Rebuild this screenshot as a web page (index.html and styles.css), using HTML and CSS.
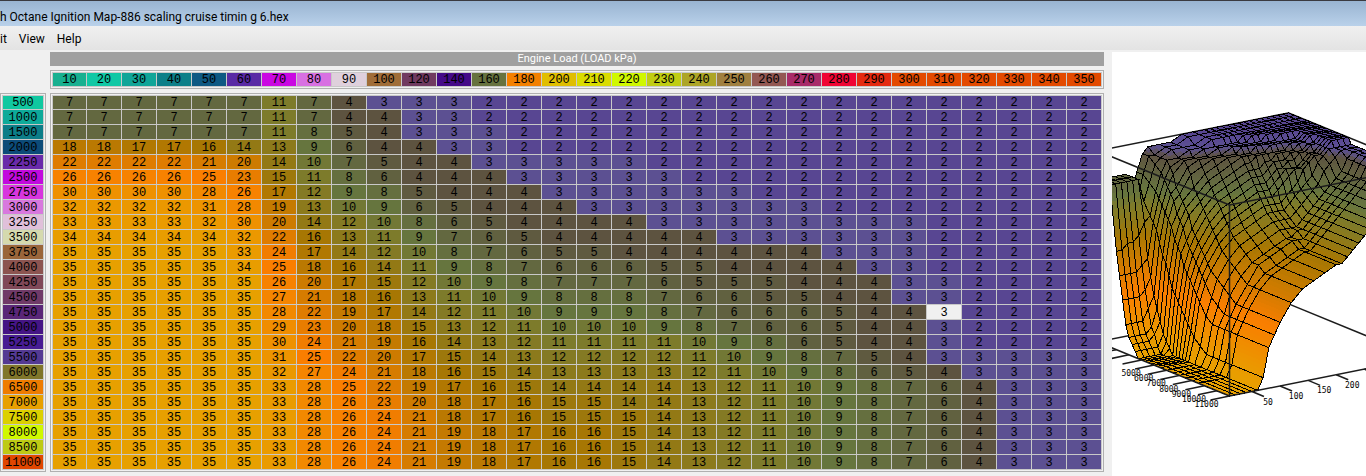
FILE: index.html
```
<!DOCTYPE html>
<html lang="en">
  <head>
    <meta charset="UTF-8" />
    <meta name="viewport" content="width=device-width, initial-scale=1.0" />
    <title>Ignition Map</title>
    <link rel="stylesheet" href="styles.css">
  </head>
  <body>
    <header class="title-bar">h Octane Ignition Map-886 scaling cruise timin g 6.hex</header>

    <nav class="menu-bar">
      <button class="menu-item">it</button>
      <button class="menu-item">View</button>
      <button class="menu-item">Help</button>
    </nav>

    <main class="workspace">
      <div class="map">
        <div class="axis-title">Engine Load (LOAD kPa)</div>
        <div class="frame load-frame">
          <table class="grid" id="loadAxis" aria-label="Engine load axis"></table>
        </div>
        <div class="frame rpm-frame">
          <table class="grid rpm-grid" id="rpmAxis" aria-label="Engine speed axis"></table>
        </div>
        <div class="frame data-frame">
          <table class="grid" id="mapData" aria-label="Ignition timing"></table>
        </div>
      </div>
      <div class="plot">
        <svg id="surface" class="surface" role="img" aria-label="Ignition timing surface"></svg>
      </div>
    </main>

    <script src="script.js"></script>
  </body>
</html>
```

FILE: styles.css
```
* {
  box-sizing: border-box;
}

body {
  margin: 0;
  min-height: 100vh;
  display: flex;
  flex-direction: column;
  overflow: hidden;
  background-color: #f0f0f0;
  color: #000;
  font-family: Roboto, "Open Sans", sans-serif;
  font-size: 12px;
}

.title-bar {
  height: 26px;
  padding-top: 6px;
  border-top: 1px solid #3a3a40;
  background: linear-gradient(#99b4d1, #b9d1ea);
  line-height: 20px;
  white-space: nowrap;
}

.menu-bar {
  display: flex;
  gap: 12px;
  height: 24px;
  background: linear-gradient(#f0f0f0, #e3e3e3);
}

.menu-item {
  padding: 2px 0 0;
  border: none;
  background: none;
  color: inherit;
  font: inherit;
  line-height: 22px;
}

.workspace {
  flex: 1;
  display: flex;
  gap: 8px;
  padding-top: 2px;
}

.map {
  flex: none;
  display: grid;
  grid-template-columns: auto auto;
  grid-template-rows: auto auto 1fr;
  gap: 4px;
  align-items: start;
}

.axis-title {
  grid-column: 2;
  height: 14px;
  background-color: #a0a0a0;
  color: #fff;
  font-size: 11px;
  line-height: 14px;
  text-align: center;
}

.frame {
  padding: 1px;
  border: 1px solid #b0b0b0;
}

.load-frame,
.data-frame {
  grid-column: 2;
}

.rpm-frame {
  grid-column: 1;
}

.grid {
  border-collapse: separate;
  border-spacing: 0;
  border-top: 1px solid #c8c8c8;
  border-left: 1px solid #c8c8c8;
  font-family: "Liberation Mono", monospace;
  font-size: 12px;
  line-height: 12px;
  text-align: center;
}

.grid th,
.grid td {
  width: 35px;
  min-width: 35px;
  height: 15px;
  padding: 1px 0 0;
  border-right: 1px solid #c8c8c8;
  border-bottom: 1px solid #c8c8c8;
  font-weight: normal;
}

.grid th:first-child,
.grid td:first-child {
  width: 34px;
  min-width: 34px;
}

.grid tr:first-child th,
.grid tr:first-child td {
  height: 14px;
}

.grid.rpm-grid th {
  width: 41px;
  min-width: 41px;
}

.grid .selected {
  background-color: #f0f0f0;
}

.plot {
  flex: 1;
  min-width: 0;
  position: relative;
  overflow: hidden;
  background-color: #fff;
}

.surface {
  display: block;
  width: 100%;
  height: 100%;
}

.mesh {
  fill: none;
  stroke: #000;
  stroke-width: 1;
  shape-rendering: crispEdges;
}

.patch {
  shape-rendering: crispEdges;
}

.axis-line {
  stroke: #1c1c1c;
  stroke-width: 1.5;
}

.tick-label {
  font-family: "DejaVu Sans Mono", monospace;
  font-size: 8px;
  text-anchor: middle;
}
```

FILE: script.js
```
const loads = [
  10, 20, 30, 40, 50, 60, 70, 80, 90, 100, 120, 140, 160, 180, 200,
  210, 220, 230, 240, 250, 260, 270, 280, 290, 300, 310, 320, 330, 340, 350
];

const loadColors = [
  "#18b090", "#10c8a5", "#10a598", "#0c7f89", "#0e5983", "#592aa5",
  "#ca08e2", "#d870e2", "#dfd0dc", "#a06d38", "#703a60", "#450a88",
  "#66723f", "#f38000", "#e0be00", "#dadc00", "#d0f800", "#c0cd13",
  "#ada527", "#a08040", "#935853", "#a82b69", "#f00434", "#e42a10",
  "#e34a00", "#e34a00", "#e34a00", "#e34a00", "#e34a00", "#e34a00"
];

const rpms = [
  500, 1000, 1500, 2000, 2250, 2500, 2750, 3000, 3250, 3500, 3750, 4000, 4250,
  4500, 4750, 5000, 5250, 5500, 6000, 6500, 7000, 7500, 8000, 8500, 11000
];

const rpmColors = [
  "#10c8a0", "#0eaa9a", "#0c7d88", "#0c4b78", "#6a2aaa", "#c20ade", "#d835de",
  "#d878de", "#e0c0da", "#d5d9ae", "#9a653a", "#8c5450", "#804858", "#703a68",
  "#5a2678", "#451585", "#471c93", "#543a93", "#80762a", "#ee7c00", "#e8a000",
  "#dcd000", "#d0f800", "#beca15", "#e14600"
];

// One row per rpm, one value per load
const timing = [
  "7 7 7 7 7 7 11 7 4 3 3 3 2 2 2 2 2 2 2 2 2 2 2 2 2 2 2 2 2 2",
  "7 7 7 7 7 7 11 7 4 4 3 3 2 2 2 2 2 2 2 2 2 2 2 2 2 2 2 2 2 2",
  "7 7 7 7 7 7 11 8 5 4 3 3 3 2 2 2 2 2 2 2 2 2 2 2 2 2 2 2 2 2",
  "18 18 17 17 16 14 13 9 6 4 4 3 3 2 2 2 2 2 2 2 2 2 2 2 2 2 2 2 2 2",
  "22 22 22 22 21 20 14 10 7 5 4 4 3 3 3 3 3 2 2 2 2 2 2 2 2 2 2 2 2 2",
  "26 26 26 26 25 23 15 11 8 6 4 4 4 3 3 3 3 3 2 2 2 2 2 2 2 2 2 2 2 2",
  "30 30 30 30 28 26 17 12 9 8 5 4 4 4 3 3 3 3 3 3 2 2 2 2 2 2 2 2 2 2",
  "32 32 32 32 31 28 19 13 10 9 6 5 4 4 4 3 3 3 3 3 3 3 2 2 2 2 2 2 2 2",
  "33 33 33 33 32 30 20 14 12 10 8 6 5 4 4 4 4 3 3 3 3 3 3 3 3 2 2 2 2 2",
  "34 34 34 34 34 32 22 16 13 11 9 7 6 5 4 4 4 4 4 3 3 3 3 3 3 2 2 2 2 2",
  "35 35 35 35 35 33 24 17 14 12 10 8 7 6 5 5 4 4 4 4 4 4 3 3 3 2 2 2 2 2",
  "35 35 35 35 35 34 25 18 16 14 11 9 8 7 6 6 6 5 5 4 4 4 4 3 3 2 2 2 2 2",
  "35 35 35 35 35 35 26 20 17 15 12 10 9 8 7 7 7 6 5 5 5 4 4 4 3 3 2 2 2 2",
  "35 35 35 35 35 35 27 21 18 16 13 11 10 9 8 8 8 7 6 6 5 5 4 4 3 3 2 2 2 2",
  "35 35 35 35 35 35 28 22 19 17 14 12 11 10 9 9 9 8 7 6 6 6 5 4 4 3 2 2 2 2",
  "35 35 35 35 35 35 29 23 20 18 15 13 12 11 10 10 10 9 8 7 6 6 5 4 4 3 2 2 2 2",
  "35 35 35 35 35 35 30 24 21 19 16 14 13 12 11 11 11 11 10 9 8 6 5 4 4 3 2 2 2 2",
  "35 35 35 35 35 35 31 25 22 20 17 15 14 13 12 12 12 12 11 10 9 8 7 5 4 3 3 3 3 3",
  "35 35 35 35 35 35 32 27 24 21 18 16 15 14 13 13 13 13 12 11 10 9 8 6 5 4 3 3 3 3",
  "35 35 35 35 35 35 33 28 25 22 19 17 16 15 14 14 14 14 13 12 11 10 9 8 7 6 4 3 3 3",
  "35 35 35 35 35 35 33 28 26 23 20 18 17 16 15 15 14 14 13 12 11 10 9 8 7 6 4 3 3 3",
  "35 35 35 35 35 35 33 28 26 24 21 18 17 16 15 15 15 14 13 12 11 10 9 8 7 6 4 3 3 3",
  "35 35 35 35 35 35 33 28 26 24 21 19 18 17 16 16 15 14 13 12 11 10 9 8 7 6 4 3 3 3",
  "35 35 35 35 35 35 33 28 26 24 21 19 18 17 16 16 15 14 13 12 11 10 9 8 7 6 4 3 3 3",
  "35 35 35 35 35 35 33 28 26 24 21 19 18 17 16 16 15 14 13 12 11 10 9 8 7 6 4 3 3 3"
].map((row) => row.split(" ").map(Number));

const selected = { rpm: 4750, load: 310 };

// Color stops: timing value, r, g, b
const stops = [
  [2, 88, 70, 146],
  [3, 92, 80, 146],
  [4, 93, 83, 64],
  [7, 99, 104, 64],
  [9, 102, 117, 62],
  [11, 125, 123, 43],
  [14, 147, 121, 21],
  [16, 167, 119, 3],
  [20, 205, 123, 0],
  [25, 250, 126, 0],
  [28, 242, 137, 0],
  [32, 235, 152, 0],
  [35, 231, 160, 0]
];

function colorFor(value) {
  let i = 1;
  while (i < stops.length - 1 && value > stops[i][0]) i++;
  const a = stops[i - 1];
  const b = stops[i];
  const t = (value - a[0]) / (b[0] - a[0]);
  const rgb = [1, 2, 3].map((k) => Math.round(a[k] + (b[k] - a[k]) * t));
  return `rgb(${rgb.join(",")})`;
}

// Tables
function addCell(row, tag, text, color) {
  const cell = document.createElement(tag);
  cell.textContent = text;
  if (color) cell.style.backgroundColor = color;
  row.appendChild(cell);
  return cell;
}

const loadRow = document.getElementById("loadAxis").insertRow();
loads.forEach((load, i) => addCell(loadRow, "th", load, loadColors[i]));

rpms.forEach((rpm, r) => {
  const axisRow = document.getElementById("rpmAxis").insertRow();
  addCell(axisRow, "th", rpm, rpmColors[r]);

  const dataRow = document.getElementById("mapData").insertRow();
  loads.forEach((load, c) => {
    const value = timing[r][c];
    if (rpm === selected.rpm && load === selected.load) {
      addCell(dataRow, "td", value).className = "selected";
    } else {
      addCell(dataRow, "td", value, colorFor(value));
    }
  });
});

// 3D surface
const svg = document.getElementById("surface");

function project(load, rpm, value) {
  const l = load - 10;
  const r = 11000 - rpm;
  return [
    117.5 + l * 0.5618 - r * 0.01257,
    344 - l * 0.1118 - r * 0.00515 - ((35 - value) * 191) / 33
  ];
}

function draw(name, attrs, text) {
  const el = document.createElementNS("http://www.w3.org/2000/svg", name);
  for (const key in attrs) el.setAttribute(key, attrs[key]);
  if (text) el.textContent = text;
  svg.appendChild(el);
}

function line(a, b) {
  draw("line", { class: "axis-line", x1: a[0], y1: a[1], x2: b[0], y2: b[1] });
}

function points(list) {
  return list.map((p) => p.map((n) => n.toFixed(1)).join(",")).join(" ");
}

function mix(a, b, t) {
  return a + (b - a) * t;
}

function drawQuad(r, c) {
  const corner = (u, v) => {
    const value = mix(
      mix(timing[r][c], timing[r][c + 1], u),
      mix(timing[r + 1][c], timing[r + 1][c + 1], u),
      v
    );
    const load = mix(loads[c], loads[c + 1], u);
    const rpm = mix(rpms[r], rpms[r + 1], v);
    return { value, at: project(load, rpm, value) };
  };

  // Split steep quads so that the color runs smoothly
  const du = Math.max(
    Math.abs(timing[r][c] - timing[r][c + 1]),
    Math.abs(timing[r + 1][c] - timing[r + 1][c + 1])
  );
  const dv = Math.max(
    Math.abs(timing[r][c] - timing[r + 1][c]),
    Math.abs(timing[r][c + 1] - timing[r + 1][c + 1])
  );
  const nu = Math.min(8, du * 2) || 1;
  const nv = Math.min(8, dv * 2) || 1;
  for (let j = 0; j < nv; j++) {
    for (let i = nu - 1; i >= 0; i--) {
      const quad = [
        corner(i / nu, j / nv),
        corner((i + 1) / nu, j / nv),
        corner((i + 1) / nu, (j + 1) / nv),
        corner(i / nu, (j + 1) / nv)
      ];
      const color = colorFor(quad.reduce((sum, q) => sum + q.value, 0) / 4);
      draw("polygon", {
        class: "patch",
        points: points(quad.map((q) => q.at)),
        fill: color
      });
    }
  }

  draw("polygon", {
    class: "mesh",
    points: points([corner(0, 0), corner(1, 0), corner(1, 1), corner(0, 1)].map((q) => q.at))
  });
}

// Box edges behind the surface
line(project(10, 500, 2), project(350, 500, 2));
line(project(350, 500, 2), project(350, 11000, 2));
line(project(10, 500, 35), project(350, 500, 35));
line(project(350, 500, 35), project(350, 11000, 35));

// Back to front
for (let r = 0; r < rpms.length - 1; r++) {
  for (let c = loads.length - 2; c >= 0; c--) {
    drawQuad(r, c);
  }
}

// Box edges in front of the surface
line(project(10, 11000, 2), project(10, 500, 2));
line(project(10, 11000, 2), project(350, 11000, 2));
line(project(10, 11000, 2), project(10, 11000, 35));
line(project(10, 11000, 35), project(10, 500, 35));
line(project(10, 11000, 35), project(350, 11000, 35));

for (let load = 50; load <= 350; load += 50) {
  const [x, y] = project(load, 11000, 35);
  line([x, y], [x + 12, y + 5]);
  draw("text", { class: "tick-label", x: x + 16, y: y + 13 }, load);
}

for (let rpm = 1000; rpm <= 11000; rpm += 1000) {
  const [x, y] = project(10, rpm, 35);
  line([x, y], [x - 19, y + 4]);
  // Labels cut by the left edge are left out
  if (x - 34 > 0) {
    draw("text", { class: "tick-label", x: x - 23, y: y + 11 }, rpm);
  }
}
```
